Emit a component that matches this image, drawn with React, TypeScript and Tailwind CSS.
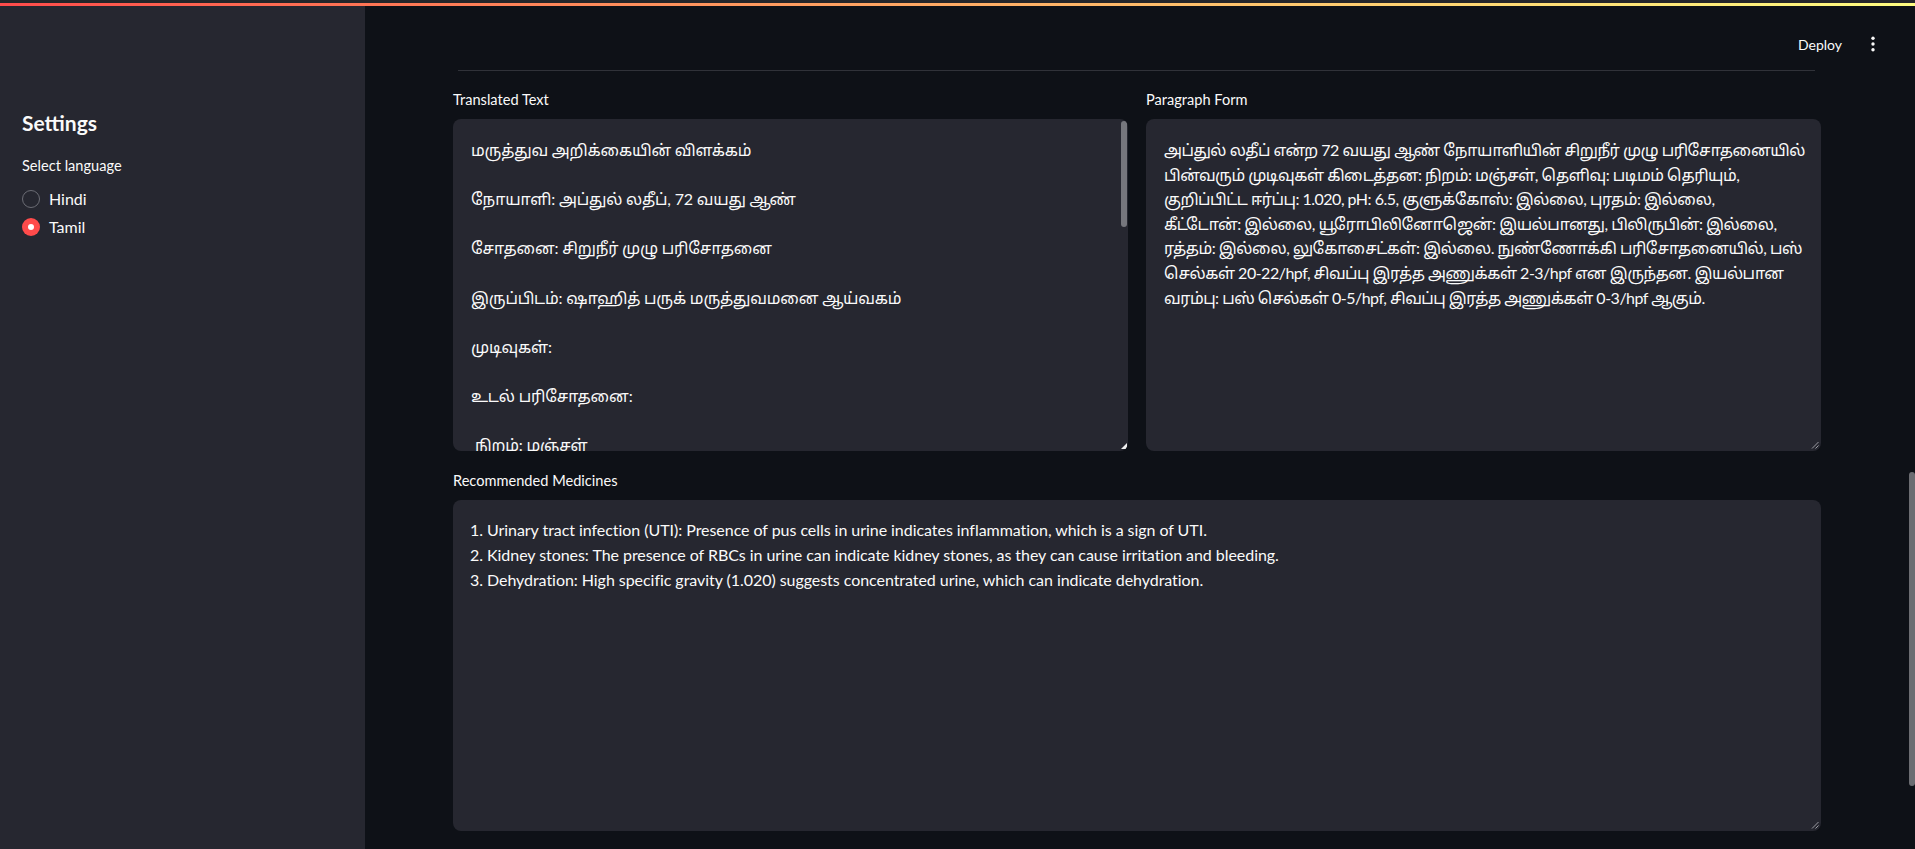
import React from "react";

const FONT = "font-['Lato','Noto_Sans_Tamil','Noto_Sans',sans-serif]";

const translated = [
  "மருத்துவ அறிக்கையின் விளக்கம்",
  "",
  "நோயாளி: அப்துல் லதீப், 72 வயது ஆண்",
  "",
  "சோதனை: சிறுநீர் முழு பரிசோதனை",
  "",
  "இருப்பிடம்: ஷாஹித் பருக் மருத்துவமனை ஆய்வகம்",
  "",
  "முடிவுகள்:",
  "",
  "உடல் பரிசோதனை:",
  "",
  " நிறம்: மஞ்சள்",
  " தெளிவு: படிமம் தெரியும்",
  " குறிப்பிட்ட ஈர்ப்பு: 1.020",
  " pH: 6.5",
];

const paragraph = [
  "அப்துல் லதீப் என்ற 72 வயது ஆண் நோயாளியின் சிறுநீர் முழு பரிசோதனையில்",
  "பின்வரும் முடிவுகள் கிடைத்தன: நிறம்: மஞ்சள், தெளிவு: படிமம் தெரியும்,",
  "குறிப்பிட்ட ஈர்ப்பு: 1.020, pH: 6.5, குளுக்கோஸ்: இல்லை, புரதம்: இல்லை,",
  "கீட்டோன்: இல்லை, யூரோபிலினோஜென்: இயல்பானது, பிலிருபின்: இல்லை,",
  "ரத்தம்: இல்லை, லுகோசைட்கள்: இல்லை. நுண்ணோக்கி பரிசோதனையில், பஸ்",
  "செல்கள் 20-22/hpf, சிவப்பு இரத்த அணுக்கள் 2-3/hpf என இருந்தன. இயல்பான",
  "வரம்பு: பஸ் செல்கள் 0-5/hpf, சிவப்பு இரத்த அணுக்கள் 0-3/hpf ஆகும்.",
];

const medicines = [
  "1. Urinary tract infection (UTI): Presence of pus cells in urine indicates inflammation, which is a sign of UTI.",
  "2. Kidney stones: The presence of RBCs in urine can indicate kidney stones, as they can cause irritation and bleeding.",
  "3. Dehydration: High specific gravity (1.020) suggests concentrated urine, which can indicate dehydration.",
];

function Resizer() {
  return (
    <svg className="absolute bottom-[2px] right-[2px]" width="8" height="8" viewBox="0 0 8 8">
      <line x1="1" y1="7.5" x2="7.5" y2="1" stroke="#9a9ba1" strokeWidth="1" />
      <line x1="4.5" y1="7.5" x2="7.5" y2="4.5" stroke="#9a9ba1" strokeWidth="1" />
    </svg>
  );
}

function Label({ children }: { children: React.ReactNode }) {
  return <div className="h-[21px] text-[14.6px] leading-[21px] text-[#fafafa]">{children}</div>;
}

export default function App() {
  return (
    <div className={`flex h-screen w-full flex-col overflow-hidden bg-[#0e1117] text-[#fafafa] ${FONT}`}>
      <div className="h-[3px] bg-[#25262a]" />
      <div className="h-[3px] bg-linear-to-r from-[#ff4b4b] to-[#fffd80]" />
      <div className="flex min-h-0 flex-1">
        <aside className="w-[365px] shrink-0 bg-[#262730] pl-[22px] pt-[105px]">
          <h2 className="text-[21px] font-bold leading-[24px]">Settings</h2>
          <div className="mt-[20px] text-[14.6px] leading-[21px]">Select language</div>
          <div className="mt-[9px] flex flex-col">
            <div className="flex h-[28px] items-center">
              <span className="h-[18px] w-[18px] rounded-full border-[1.5px] border-[#6b6c74]" />
              <span className="ml-[9px] text-[16px]">Hindi</span>
            </div>
            <div className="flex h-[28px] items-center">
              <span className="flex h-[18px] w-[18px] items-center justify-center rounded-full bg-[#ff4b4b]">
                <span className="h-[6px] w-[6px] rounded-full bg-white" />
              </span>
              <span className="ml-[9px] text-[16px]">Tamil</span>
            </div>
          </div>
        </aside>

        <main className="relative min-w-0 flex-1">
          <div className="mt-[18px] flex h-[40px] items-center justify-end pr-[30px]">
            <span className="text-[14px]">Deploy</span>
            <svg className="ml-[19px]" width="24" height="24" viewBox="0 0 24 24">
              <circle cx="12" cy="6.3" r="1.7" fill="#fafafa" />
              <circle cx="12" cy="12" r="1.7" fill="#fafafa" />
              <circle cx="12" cy="17.7" r="1.7" fill="#fafafa" />
            </svg>
          </div>

          <div className="pl-[88px] pr-[94px]">
            <div className="mt-[6px] ml-[5px] mr-[6px] h-px bg-[#303239]" />

            <div className="mt-[18px] grid grid-cols-2 gap-[18px]">
              <div>
                <Label>Translated Text</Label>
                <div className="relative mt-[9px] h-[332px] overflow-hidden rounded-lg bg-[#262730] px-[18px] pt-[19px]">
                  <div className="whitespace-pre text-[16px] leading-[24.6px] tracking-[-0.2px]">{translated.join("\n")}</div>
                  <div className="absolute right-[1px] top-[2px] h-[106px] w-[6px] rounded-full bg-[#76777d]" />
                  <svg className="absolute bottom-[2px] right-[1px]" width="6" height="6" viewBox="0 0 6 6">
                    <polygon points="6,0 6,6 0,6" fill="#f0f0f0" />
                  </svg>
                </div>
              </div>
              <div>
                <Label>Paragraph Form</Label>
                <div className="relative mt-[9px] h-[332px] overflow-hidden rounded-lg bg-[#262730] px-[18px] pt-[19px]">
                  <div className="whitespace-pre text-[16px] leading-[24.6px] tracking-[-0.5px]">{paragraph.join("\n")}</div>
                  <Resizer />
                </div>
              </div>
            </div>

            <div className="mt-[19px]">
              <Label>Recommended Medicines</Label>
              <div className="relative mt-[9px] h-[331px] overflow-hidden rounded-lg bg-[#262730] px-[17px] pt-[17px]">
                <div className="whitespace-pre text-[16px] leading-[25px] tracking-[-0.05px]">{medicines.join("\n")}</div>
                <Resizer />
              </div>
            </div>
          </div>

          <div className="absolute right-0 top-[466px] h-[314px] w-[6px] rounded-full bg-[#6c6d72]" />
        </main>
      </div>
    </div>
  );
}
